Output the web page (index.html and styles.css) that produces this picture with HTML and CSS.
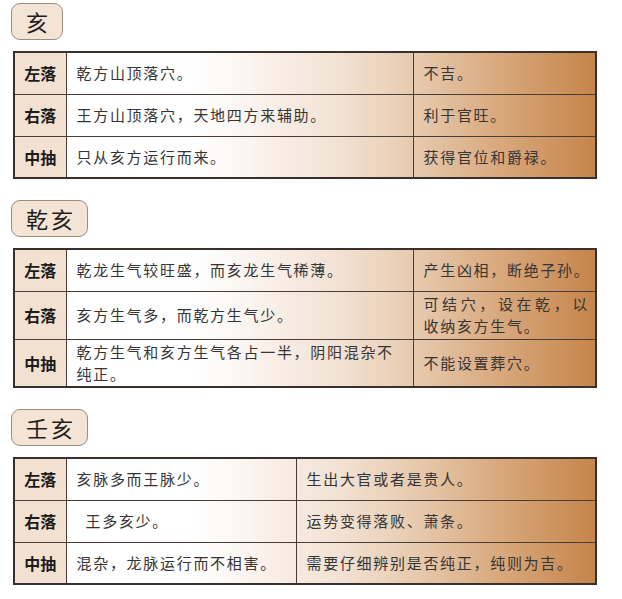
FILE: index.html
```html
<!DOCTYPE html>
<html lang="zh">
<head>
<meta charset="utf-8">
<title>亥</title>
<link rel="stylesheet" href="styles.css">
</head>
<body>
<main class="page">
  <section class="block">
    <div class="title">亥</div>
    <table class="grid">
      <colgroup><col class="c-label"><col class="c-wide"><col class="c-narrow"></colgroup>
      <tr><th>左落</th><td>乾方山顶落穴。</td><td>不吉。</td></tr>
      <tr><th>右落</th><td>王方山顶落穴，天地四方来辅助。</td><td>利于官旺。</td></tr>
      <tr><th>中抽</th><td>只从亥方运行而来。</td><td>获得官位和爵禄。</td></tr>
    </table>
  </section>

  <section class="block">
    <div class="title">乾亥</div>
    <table class="grid">
      <colgroup><col class="c-label"><col class="c-wide"><col class="c-narrow"></colgroup>
      <tr><th>左落</th><td>乾龙生气较旺盛，而亥龙生气稀薄。</td><td>产生凶相，断绝子孙。</td></tr>
      <tr class="tall"><th>右落</th><td>亥方生气多，而乾方生气少。</td><td class="just">可结穴，设在乾，以收纳亥方生气。</td></tr>
      <tr class="tall"><th>中抽</th><td>乾方生气和亥方生气各占一半，阴阳混杂不纯正。</td><td>不能设置葬穴。</td></tr>
    </table>
  </section>

  <section class="block">
    <div class="title">壬亥</div>
    <table class="grid">
      <colgroup><col class="c-label"><col class="c-mid"><col class="c-rest"></colgroup>
      <tr><th>左落</th><td>亥脉多而王脉少。</td><td>生出大官或者是贵人。</td></tr>
      <tr><th>右落</th><td class="indent">王多亥少。</td><td>运势变得落败、萧条。</td></tr>
      <tr><th>中抽</th><td>混杂，龙脉运行而不相害。</td><td>需要仔细辨别是否纯正，纯则为吉。</td></tr>
    </table>
  </section>
</main>
</body>
</html>
```

FILE: styles.css
```css
html, body {
  margin: 0;
  padding: 0;
  background: #ffffff;
}

.page {
  padding: 3px 0 0 11px;
  font-family: "Noto Sans CJK SC", "Noto Sans", sans-serif;
  color: #353535;
}

.block {
  display: flex;
  flex-direction: column;
  align-items: flex-start;
  margin-bottom: 21px;
}

.title {
  box-sizing: border-box;
  height: 37px;
  line-height: 34px;
  padding: 0 11px 0 14px;
  font-size: 22px;
  letter-spacing: 3px;
  color: #1e1e1e;
  background: #f4e4d5;
  border: 1px solid #9c8c82;
  border-radius: 9px;
}

.grid {
  margin: 11px 0 0 2px;
  width: 582px;
  table-layout: fixed;
  border-collapse: collapse;
  border: 2px solid #3a302b;
  background: linear-gradient(to right,
    #ffffff 0%,
    #ffffff 31%,
    #f2e1d3 56%,
    #e7caae 69%,
    #d8a77b 84%,
    #c5844b 100%);
}

.c-label { width: 52px; }
.c-wide { width: 347px; }
.c-narrow { width: 183px; }
.c-mid { width: 230px; }
.c-rest { width: 300px; }

.grid tr { height: 42px; }
.grid tr.tall { height: 48px; }

.grid th,
.grid td {
  border: 1px solid #4a3d35;
  padding: 0 4px 0 10px;
  font-size: 15px;
  line-height: 22px;
  letter-spacing: 1.7px;
  text-align: left;
  vertical-align: middle;
  font-weight: 400;
}

.grid th {
  padding: 0;
  text-align: center;
  background: #f2e1d1;
  font-size: 16px;
  font-weight: 700;
  letter-spacing: 0;
  color: #1b1b1b;
}

.grid td.just {
  text-align: justify;
  padding-right: 6px;
}

.grid td.indent {
  padding-left: 19px;
}
```
